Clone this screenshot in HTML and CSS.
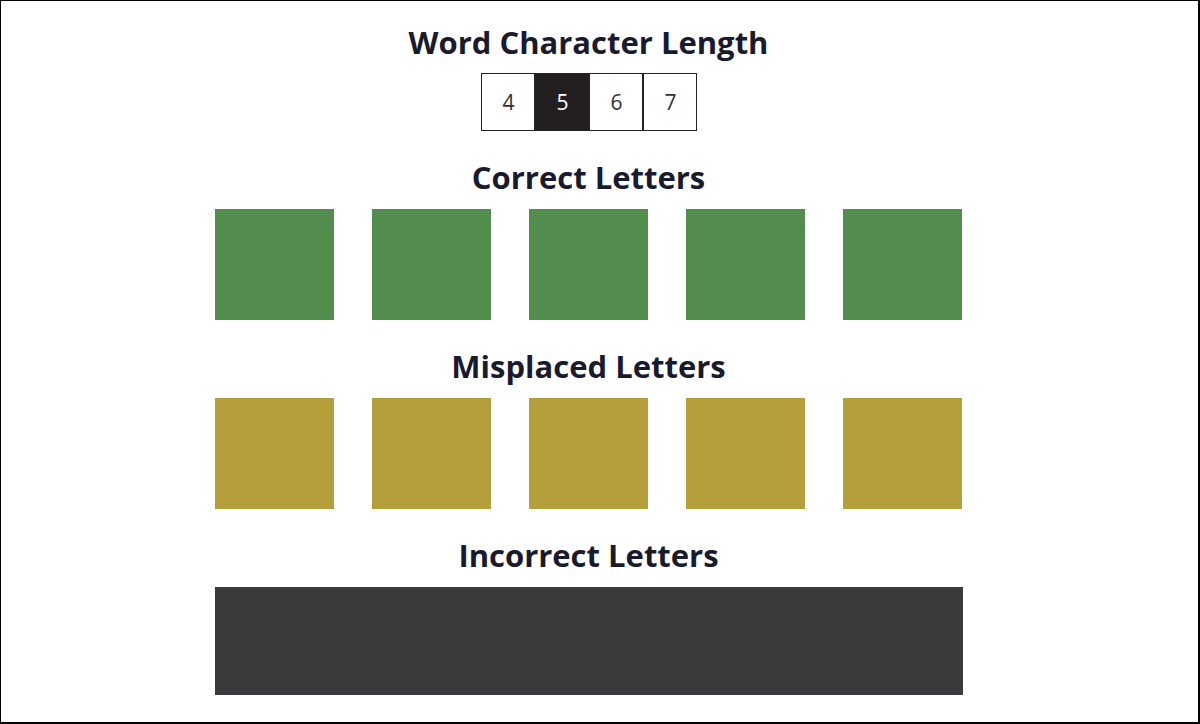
FILE: index.html
```html
<!DOCTYPE html>
<html lang="en">
<head>
  <meta charset="UTF-8" />
  <meta name="viewport" content="width=device-width, initial-scale=1.0"/>
  <title>Wordle Helper</title>
  <link rel="stylesheet" href="styles.css">
</head>
<body>
  <div class="page">
    <section class="block">
      <h2>Word Character Length</h2>
      <div class="lengths">
        <button>4</button>
        <button class="active">5</button>
        <button>6</button>
        <button>7</button>
      </div>
    </section>

    <section class="block">
      <h2>Correct Letters</h2>
      <div class="tiles">
        <div class="tile correct"></div>
        <div class="tile correct"></div>
        <div class="tile correct"></div>
        <div class="tile correct"></div>
        <div class="tile correct"></div>
      </div>
    </section>

    <section class="block">
      <h2>Misplaced Letters</h2>
      <div class="tiles">
        <div class="tile misplaced"></div>
        <div class="tile misplaced"></div>
        <div class="tile misplaced"></div>
        <div class="tile misplaced"></div>
        <div class="tile misplaced"></div>
      </div>
    </section>

    <section class="block">
      <h2>Incorrect Letters</h2>
      <div class="incorrect"></div>
    </section>
  </div>
</body>
</html>
```

FILE: styles.css
```css
body {
  margin: 0;
  font-family: 'Open Sans', sans-serif;
  color: #1a1a2e;
  background: #fff;
}
.page {
  box-sizing: border-box;
  width: 1200px;
  height: 724px;
  border: 1px solid #000;
  border-right-width: 2px;
  border-bottom-width: 2px;
  padding: 25px 22px 0 0;
  display: flex;
  flex-direction: column;
  align-items: center;
  gap: 30px;
}
.block {
  display: flex;
  flex-direction: column;
  align-items: center;
  gap: 12px;
}
.block:first-child {
  gap: 11px;
}
h2 {
  margin: -2px 0 2px;
  font-size: 31px;
  line-height: 36px;
  font-weight: 700;
}
.lengths {
  display: flex;
  padding-left: 2px;
}
.lengths button {
  width: 54px;
  height: 58px;
  border: 1px solid #222;
  background: #fff;
  color: #333;
  font-family: 'Open Sans', sans-serif;
  font-size: 21px;
  padding: 0;
  cursor: pointer;
}
.lengths button.active {
  background: #231f20;
  color: #fff;
}
.tiles {
  display: flex;
  gap: 38px;
}
.tile {
  width: 119px;
  height: 111px;
}
.correct {
  background: #538d4e;
}
.misplaced {
  background: #b59f3b;
}
.incorrect {
  width: 748px;
  height: 108px;
  background: #3a3a3c;
}
```
